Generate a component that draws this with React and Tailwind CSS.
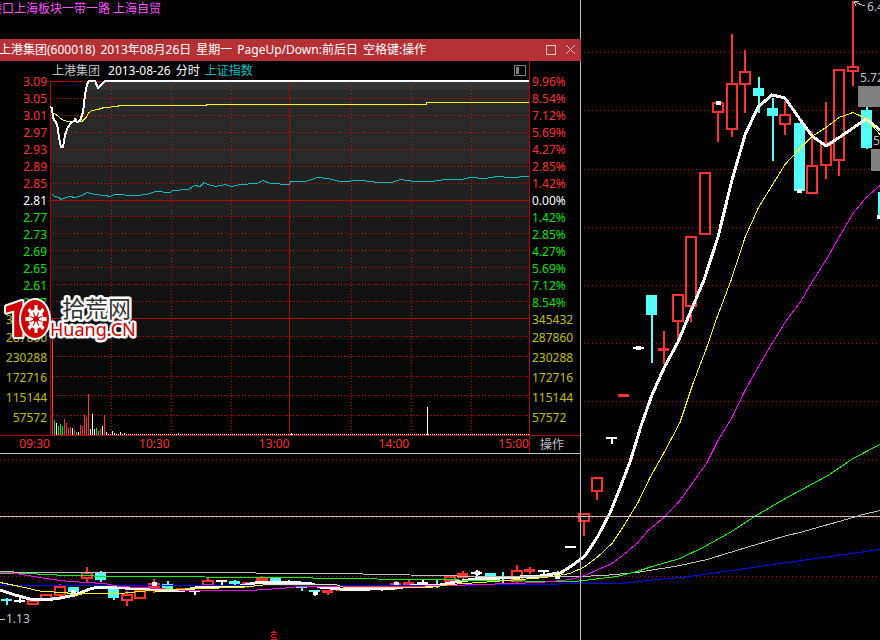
import React from 'react';

const RED = '#ff3232';
const CYAN = '#54ffff';
const WHITE = '#ffffff';

// [centre x, high, body top, body bottom, low]
const upCandles = [
  [33, 600, 600, 605, 605],
  [46, 594, 594, 601, 601],
  [60, 584, 586, 596, 600],
  [87, 567, 572, 579, 582],
  [127, 591, 594, 601, 606],
  [140, 588, 590, 599, 599],
  [154, 579, 583, 588, 593],
  [208, 578, 580, 586, 586],
  [262, 578, 578, 584, 584],
  [450, 576, 576, 582, 582],
  [517, 565, 570, 582, 583],
  [584, 513, 513, 522, 536],
  [597, 477, 477, 492, 500],
  [678, 294, 294, 322, 339],
  [691, 236, 236, 307, 322],
  [705, 172, 172, 235, 235],
  [718, 102, 102, 113, 142],
  [732, 34, 83, 130, 137],
  [745, 50, 71, 85, 113],
  [785, 101, 114, 125, 135],
  [812, 131, 165, 194, 194],
  [826, 102, 142, 166, 179],
  [839, 69, 69, 161, 176],
  [853, 1, 66, 72, 86],
];

// filled candles: [centre x, high, body top, body bottom, low, colour]
const solidCandles = [
  [7, 598, 599, 601, 605, CYAN],
  [20, 598, 600, 602, 603, WHITE],
  [74, 587, 587, 592, 592, CYAN],
  [101, 571, 573, 580, 582, CYAN],
  [114, 588, 588, 598, 600, CYAN],
  [168, 581, 584, 589, 589, CYAN],
  [182, 588, 588, 591, 592, RED],
  [195, 590, 590, 592, 595, WHITE],
  [222, 580, 580, 582, 585, WHITE],
  [235, 580, 581, 584, 585, CYAN],
  [248, 582, 582, 585, 588, RED],
  [262, 576, 578, 581, 582, RED],
  [276, 577, 578, 582, 582, CYAN],
  [289, 580, 581, 584, 584, WHITE],
  [302, 586, 586, 588, 591, CYAN],
  [315, 590, 590, 592, 596, CYAN],
  [328, 590, 590, 593, 595, RED],
  [342, 589, 589, 591, 591, RED],
  [382, 588, 588, 590, 591, WHITE],
  [396, 581, 583, 586, 590, RED],
  [409, 579, 582, 585, 585, RED],
  [423, 580, 582, 585, 585, WHITE],
  [463, 571, 573, 578, 580, RED],
  [477, 570, 572, 574, 577, WHITE],
  [491, 573, 573, 576, 576, CYAN],
  [530, 567, 569, 572, 574, RED],
  [544, 570, 570, 572, 574, WHITE],
  [558, 571, 572, 574, 577, CYAN],
  [571, 546, 546, 548, 548, WHITE],
  [612, 437, 437, 439, 444, WHITE],
  [624, 394, 394, 397, 397, RED],
  [639, 347, 347, 349, 350, WHITE],
  [652, 295, 295, 315, 363, CYAN],
  [664, 331, 348, 351, 364, RED],
  [759, 77, 88, 96, 113, CYAN],
  [773, 98, 108, 116, 161, CYAN],
  [800, 123, 123, 191, 191, CYAN],
  [867, 107, 110, 148, 149, CYAN],
  [884, 192, 192, 219, 221, CYAN],
];

// small white marks on top of candles
const marks = [
  [71, 590, 5, 4],
  [152, 582, 5, 4],
  [313, 591, 5, 4],
  [394, 582, 5, 3],
  [475, 571, 5, 4],
  [555, 576, 5, 3],
  [636, 346, 5, 4],
  [716, 101, 5, 4],
  [797, 189, 5, 4],
  [877, 215, 3, 4],
];

const averages = [
  {
    color: '#0000ff',
    points: '0,585.5 450,585.5 500,584.5 620,583.5 658,579.5 690,576.5 753,567.5 787,562.5 823,557.5 880,549.5',
  },
  {
    color: '#c0c0c0',
    points:
      '0,571.5 27,572.5 175,572.5 336,573.5 390,574.5 430,575.5 483,576.5 580,576.5 603,575.5 637,572.5 680,565.5 707,559.5 753,545.5 787,535.5 800,532.5 853,517.5 863,514.5 880,510.5',
  },
  {
    color: '#00ff00',
    points:
      '0,573.5 27,573.5 67,575.5 120,576.5 290,577.5 336,578.5 417,579.5 500,580.5 550,581.5 575,581.5 592,579.5 617,576.5 637,571.5 652,566.5 680,558.5 703,547.5 730,532.5 753,517.5 787,497.5 828,475.5 853,458.5 880,444.5',
  },
  {
    color: '#ff00ff',
    points:
      '0,572.5 10,572.5 40,577.5 60,580.5 85,582.5 104,583.5 120,586.5 160,588.5 185,590.5 250,590.5 280,588.5 300,586.5 400,586.5 450,585.5 480,584.5 540,582.5 562,580.5 570,579.5 585,575.5 598,569.5 612,563.5 625,553.5 638,542.5 648,530.5 664,517.5 680,500.5 707,462.5 718,440.5 732,417.5 745,390.5 758,367.5 772,343.5 787,319.5 800,302.5 813,280.5 827,258.5 840,235.5 853,213.5 866,197.5 880,185.5',
  },
  {
    color: '#ffff00',
    points:
      '0,582.5 20,586.5 42,591.5 65,592.5 75,594.5 90,593.5 120,593.5 150,590.5 170,589.5 200,588.5 240,587.5 268,584.5 335,584.5 345,587.5 430,587.5 450,584.5 480,582.5 520,579.5 545,577.5 570,573.5 585,566.5 597,557.5 612,543.5 624,525.5 638,502.5 650,477.5 663,454.5 680,422.5 693,383.5 706,349.5 717,317.5 731,280.5 745,237.5 758,208.5 772,185.5 785,164.5 799,149.5 812,136.5 826,127.5 839,117.5 853,112.5 866,118.5 880,134.5',
  },
];

const fastAverage =
  '0,590 15,595 30,599 45,600 60,598 75,595 90,589 98,587 110,587 125,588 145,588 155,590 165,591 185,590 200,587 240,586 255,583 290,582 312,584 320,587 340,589 370,589 395,588 410,586 440,585 455,582 475,579 500,578 540,576 560,573 570,567 585,556 598,536 610,513 620,488 630,462 641,426 652,395 664,368 678,342 690,313 704,280 718,237 732,180 745,135 758,107 772,95 785,98 799,118 812,136 826,146 840,137 866,119 880,130';

const mainGrid = [52, 110, 169, 227, 285, 343, 401, 459, 517, 576];

function DailyChart() {
  return (
    <svg
      className="absolute inset-0 h-full w-full"
      viewBox="0 0 880 640"
      preserveAspectRatio="none"
      shapeRendering="crispEdges"
      fontSize="12"
      aria-label="日K线"
    >
      {mainGrid.map((y) => (
        <line key={y} x1="0" x2="880" y1={y + 0.5} y2={y + 0.5} stroke="#b00000" strokeDasharray="1 3" />
      ))}

      {upCandles.map(([x, high, top, bottom, low]) => (
        <g key={x}>
          <rect x={x - 1} y={high} width="2" height={top - high} fill={RED} />
          <rect x={x - 1} y={bottom} width="2" height={low - bottom} fill={RED} />
          <rect x={x - 5} y={top + 1} width="10" height={Math.max(bottom - top - 2, 1)} fill="none" stroke={RED} strokeWidth="2" />
        </g>
      ))}
      {solidCandles.map(([x, high, top, bottom, low, color]) => (
        <g key={x} fill={color}>
          <rect x={x - 1} y={high} width="2" height={low - high} />
          <rect x={x - 6} y={top} width="11" height={bottom - top} />
        </g>
      ))}
      <rect x="436" y="580" width="2" height="8" fill={CYAN} />
      <rect x="502" y="572" width="2" height="11" fill={CYAN} />

      <polyline points={fastAverage} fill="none" stroke={WHITE} strokeWidth="3" />
      {averages.map((line) => (
        <polyline key={line.color} points={line.points} fill="none" stroke={line.color} />
      ))}
      {marks.map(([x, y, w, h]) => (
        <rect key={x} x={x} y={y} width={w} height={h} fill={WHITE} />
      ))}

      {/* Crosshair */}
      <path d="M0 516.5H880M580.5 0V640" stroke="#c0c0c0" />

      {/* Price labels */}
      <rect x="858" y="86" width="22" height="21" fill="#808080" />
      <rect x="871" y="149" width="9" height="22" fill="#808080" />
      <path d="M854 2L865 6M854 2L859 1M854 2L856 6M0 619.5H5" stroke="#c0c0c0" />
      <g fill="#c0c0c0">
        <text x="867" y="11">6.43</text>
        <text x="860" y="82">5.72</text>
        <text x="873" y="145">5.35</text>
        <text x="6" y="623">1.13</text>
      </g>
      <path d="M273 631h2v1h2v1h-6v-1h2z" fill="#ff0000" />
      <path d="M277 634.5H272M271.5 635V637M272 637.5H276M276.5 638V640M271 639.5H276" stroke="#ff0000" />
    </svg>
  );
}

const bands = [
  [80, 10, '#333333'],
  [90, 73, '#292929'],
  [163, 53, '#212121'],
  [216, 65, '#1a1a1a'],
  [281, 59, '#111111'],
  [340, 59, '#080808'],
];

const gridRows = [98, 115, 132, 149, 166, 183, 216, 233, 250, 267, 284, 301, 336, 356, 376, 395, 415];
const gridColumns = [111, 171, 231, 351, 411, 471];

const R = RED;
const G = '#00e600';
const W = WHITE;
const volumes = [
  [52, 318, R], [54, 420, G], [56, 423, W], [58, 426, G], [60, 424, G], [62, 426, G], [64, 419, R],
  [66, 423, R], [68, 428, R], [70, 427, R], [72, 428, W], [74, 430, R], [76, 432, G], [78, 432, W],
  [80, 425, R], [82, 426, R], [84, 415, R], [86, 417, R], [88, 394, R], [90, 429, W], [92, 414, W],
  [94, 429, W], [96, 428, G], [98, 431, G], [100, 429, R], [102, 426, W], [104, 415, R], [106, 432, W],
  [112, 431, W], [114, 433, W], [120, 432, W], [124, 433, W], [178, 433, W], [291, 433, W], [427, 407, W],
];

const priceLine =
  '50,107 52,108 53,118 57,124 59,137 61,147 63,147 65,135 68,127 72,122 74,121 75,119 77,122 80,121 83,112 85,95 87,84 89,81 95,81 98,88 101,85 105,81 529,81';

function IntradayChart() {
  return (
    <svg
      className="block h-[355px] w-full"
      viewBox="50 80 479 355"
      preserveAspectRatio="none"
      shapeRendering="crispEdges"
      aria-label="分时走势"
    >
      <clipPath id="under-price">
        <polygon points={`${priceLine} 529,435 50,435`} />
      </clipPath>
      <g clipPath="url(#under-price)">
        {bands.map(([y, h, fill]) => (
          <rect key={y} x="50" y={y} width="479" height={h} fill={fill} />
        ))}
      </g>
      <g stroke="#c00000" strokeDasharray="1 2">
        {gridRows.map((y) => (
          <line key={y} x1="53" x2="529" y1={y + 0.5} y2={y + 0.5} />
        ))}
        {gridColumns.map((x) => (
          <line key={x} x1={x + 0.5} x2={x + 0.5} y1="84" y2="435" />
        ))}
      </g>
      <path d="M50 81.5H529M50 200.5H529M50 318.5H529M50.5 81V435M289.5 81V435" stroke="#b40000" />

      <path d="M108 434.5H529" stroke={WHITE} strokeDasharray="1 1" />
      {volumes.map(([x, top, fill]) => (
        <rect key={x} x={x} y={top} width="1" height={435 - top} fill={fill} />
      ))}

      <polyline
        fill="none"
        stroke="#00c0c0"
        points="52,194.5 55,196.5 59,197.5 61,199.5 66,197.5 70,196.5 75,197.5 82,195.5 87,192.5 95,194.5 105,195.5 110,196.5 114,194.5 135,195.5 147,194.5 155,191.5 170,192.5 173,190.5 188,189.5 195,185.5 200,186.5 204,182.5 208,184.5 216,186.5 225,184.5 232,186.5 240,184.5 257,183.5 263,180.5 270,183.5 289,184.5 291,181.5 305,181.5 318,177.5 328,178.5 340,181.5 362,180.5 378,182.5 392,182.5 400,179.5 415,181.5 432,181.5 445,179.5 462,179.5 470,177.5 485,178.5 497,176.5 510,177.5 529,176.5"
      />
      <polyline
        fill="none"
        stroke="#ffff00"
        points="51,112.5 56,114.5 62,119.5 67,121.5 82,121.5 86,117.5 89,112.5 92,110.5 98,109.5 104,107.5 118,106.5 119,105.5 206,105.5 207,104.5 426,104.5 427,102.5 529,102.5"
      />
      <polyline fill="none" stroke={WHITE} strokeWidth="2" points={priceLine} />
    </svg>
  );
}

const leftPrices = ['3.09', '3.05', '3.01', '2.97', '2.93', '2.89', '2.85', '2.81', '2.77', '2.73', '2.69', '2.65', '2.61', '2.57'];
const rightPercents = ['9.96%', '8.54%', '7.12%', '5.69%', '4.27%', '2.85%', '1.42%', '0.00%', '1.42%', '2.85%', '4.27%', '5.69%', '7.12%', '8.54%'];
const volumeLabels = ['345432', '287860', '230288', '172716', '115144', '57572'];
const times = ['10:30', '13:00', '14:00', '15:00'];
const titleParts = ['上港集团(600018)', '2013年08月26日', '星期一', 'PageUp/Down:前后日', '空格键:操作'];

// rows above the previous close are red, below it green
const priceColor = (index) => {
  if (index === 7) return 'text-white';
  return index < 7 ? 'text-[#ff3232]' : 'text-[#00e600]';
};

function Axis({ prices, className }) {
  return (
    <div className={`shrink-0 pt-3 ${className}`}>
      {prices.map((label, index) => (
        <div key={index} className={`h-[17px] leading-[17px] ${priceColor(index)}`}>
          {label}
        </div>
      ))}
      {volumeLabels.map((label, index) => (
        <div key={label} className={`text-[#c0c000] ${index === 0 ? 'h-[17px] leading-[17px]' : 'h-5 leading-5'}`}>
          {label}
        </div>
      ))}
    </div>
  );
}

function Watermark() {
  const teeth = [0, 45, 90, 135, 180, 225, 270, 315];
  return (
    <svg className="absolute left-0 top-[256px] h-[50px] w-[140px]" viewBox="0 295 140 50" aria-label="拾荒网 10Huang.CN">
      <g stroke="#fff" strokeWidth="5" strokeLinejoin="round" style={{ paintOrder: 'stroke' }} fill="#d00000">
        <text x="2" y="337" fontFamily="Roboto" fontWeight="900" fontSize="50" strokeWidth="4">1</text>
        <ellipse cx="35" cy="319" rx="14" ry="19" strokeWidth="4" />
        <text x="50" y="336" fontSize="18">Huang.CN</text>
        <text x="62" y="317" fontSize="23" fill="#333">拾荒网</text>
      </g>
      {/* gear inside the zero */}
      <g transform="translate(36 319)" fill="#fff">
        <g transform="scale(0.75 1)">
          {teeth.map((angle) => (
            <rect key={angle} x="-2" y="-14" width="4" height="8" transform={`rotate(${angle})`} />
          ))}
          <circle r="10" />
        </g>
        <g stroke="#d00000" strokeWidth="1">
          {teeth.map((angle) => (
            <path key={angle} d="M0 -7V-3" transform={`rotate(${angle + 22})`} />
          ))}
        </g>
        <circle r="3" fill="#d00000" />
      </g>
    </svg>
  );
}

function IntradayWindow() {
  return (
    <section className="relative min-w-0 flex-1 bg-black">
      <header className="flex h-[22px] items-center justify-between overflow-hidden bg-[#b43034] pr-1 text-white">
        <h1 className="-ml-px flex gap-[5px] whitespace-nowrap">
          {titleParts.map((part) => (
            <span key={part}>{part}</span>
          ))}
        </h1>
        <div className="flex shrink-0 gap-2 text-[#f0c8c8]">
          <button type="button" aria-label="最大化">
            <svg width="12" height="12" fill="none" stroke="currentColor" shapeRendering="crispEdges">
              <rect x="1.5" y="1.5" width="9" height="9" />
            </svg>
          </button>
          <button type="button" aria-label="关闭">
            <svg width="12" height="12" fill="none" stroke="currentColor">
              <path d="M1 1l9 9M10 1l-9 9" />
            </svg>
          </button>
        </div>
      </header>

      <div className="border-b border-r border-[#c0c0c0]">
        <div className="flex">
          <Axis prices={leftPrices} className="w-[50px] pr-[3px] text-right" />
          <div className="min-w-0 flex-1">
            <div className="flex h-[19px] items-center justify-between pl-0.5 pr-[3px]">
              <div className="flex gap-[5px] whitespace-nowrap">
                <span className="mr-[3px] text-[#c0c0c0]">上港集团</span>
                <span className="text-white">2013-08-26</span>
                <span className="text-white">分时</span>
                <span className="text-[#00c0c0]">上证指数</span>
              </div>
              <button type="button" aria-label="侧栏">
                <svg width="12" height="11" shapeRendering="crispEdges">
                  <rect x="0.5" y="0.5" width="11" height="10" rx="1" fill="none" stroke="#808080" />
                  <rect x="2" y="2" width="3" height="7" fill="#808080" />
                </svg>
              </button>
            </div>
            <IntradayChart />
          </div>
          <Axis prices={rightPercents} className="w-[51px] border-l border-[#b40000] pl-0.5" />
        </div>

        <div className="flex h-[18px] border-t border-[#b40000] leading-4 text-[#ff3232]">
          <span className="w-[50px] shrink-0 text-right">09:30</span>
          <div className="grid flex-1 grid-cols-4 text-right">
            {times.map((time) => (
              <span key={time}>{time}</span>
            ))}
          </div>
          <button type="button" className="w-[51px] shrink-0 border-l border-[#b40000] pr-1.5 text-[#c0c0c0]">
            操作
          </button>
        </div>
      </div>
      <Watermark />
    </section>
  );
}

export default function App() {
  return (
    <main className="relative min-h-screen overflow-hidden bg-black font-['Noto_Sans','Noto_Sans_CJK_SC',sans-serif] text-[12px] leading-4">
      <DailyChart />
      <div className="relative">
        <p className="-ml-2.5 h-[39px] whitespace-nowrap pt-px text-[#ff54ff]">港口上海板块一带一路 上海自贸</p>
        <div className="flex">
          <IntradayWindow />
          <div className="w-[299px] shrink-0" />
        </div>
      </div>
    </main>
  );
}
